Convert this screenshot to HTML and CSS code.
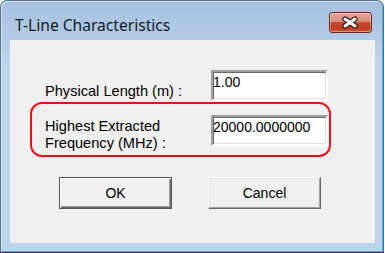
FILE: index.html
```html
<!DOCTYPE html>
<html>
<head>
<meta charset="utf-8">
<link rel="stylesheet" href="styles.css">
</head>
<body>
<div class="window">
  <div class="titlebar">
    <span class="title">T-Line Characteristics</span>
    <div class="close">
      <svg width="41" height="19" viewBox="0 0 41 19">
        <path d="M15 6 L25 13 M25 6 L15 13" stroke="#3a1d18" stroke-width="5.4" stroke-linecap="round" fill="none"/>
        <path d="M15 6 L25 13 M25 6 L15 13" stroke="#ffffff" stroke-width="3" stroke-linecap="round" fill="none"/>
      </svg>
    </div>
  </div>
  <div class="client">
    <div class="row">
      <span class="label label-single">Physical Length (m) :</span>
      <div class="edit">1.00</div>
    </div>
    <div class="highlight">
      <div class="row">
        <span class="label label-double">Highest Extracted<br>Frequency (MHz) :</span>
        <div class="edit">20000.0000000</div>
      </div>
    </div>
    <div class="buttons">
      <div class="btn btn-default">OK</div>
      <div class="btn">Cancel</div>
    </div>
  </div>
</div>
</body>
</html>
```
FILE: styles.css
```css
html, body {
  margin: 0;
  padding: 0;
  background: #ffffff;
}
body {
  font-family: "Liberation Sans", Arial, sans-serif;
  font-size: 14px;
  line-height: 17px;
  color: #000;
}
.window {
  box-sizing: border-box;
  width: 384px;
  height: 253px;
  border: 1px solid #55708c;
  border-bottom-color: #2b3b4c;
  border-radius: 7px 7px 0 0;
  background: linear-gradient(#a6c1df 0px, #b3cbe6 38px, #bcd4ec 60px, #bcd4ec 100%);
  box-shadow: inset 1px 1px 0 rgba(255,255,255,0.55), inset -1px -1px 0 #3cb4d8;
  padding: 0 8px 9px 9px;
  display: flex;
  flex-direction: column;
}
.titlebar {
  height: 39px;
  flex: none;
  display: flex;
  align-items: flex-start;
  justify-content: space-between;
  padding-left: 5px;
}
.title {
  font-family: "Noto Sans", "Open Sans", sans-serif;
  font-size: 15.6px;
  line-height: 20px;
  margin-top: 14px;
  color: #111a24;
}
.close {
  box-sizing: border-box;
  width: 43px;
  height: 21px;
  margin-top: 11px;
  margin-right: 3px;
  border: 1px solid #6a2a22;
  border-radius: 3px;
  background: linear-gradient(#e4a898 0%, #d98d7c 45%, #c54a31 50%, #bd3b22 80%, #cc5a3e 100%);
  box-shadow: inset 0 0 0 1px rgba(255,255,255,0.35);
}
.close svg {
  display: block;
}
.client {
  flex: none;
  height: 203px;
  background: #f0f0f0;
  padding: 30px 0 0 20px;
  box-sizing: border-box;
}
.row {
  display: flex;
  padding-left: 15px;
}
.label {
  width: 166px;
  flex: none;
  font-size: 14.6px;
}
.label-single {
  padding-top: 13px;
}
.label-double {
  padding-top: 3px;
}
.edit {
  box-sizing: border-box;
  width: 117px;
  height: 31px;
  background: #fff;
  border-style: solid;
  border-width: 2px;
  border-color: #a0a0a0 #ffffff #ffffff #a0a0a0;
  box-shadow: inset 1px 1px 0 #696969, inset -1px -1px 0 #e3e3e3;
  padding: 2px 0 0 0;
}
.highlight {
  box-sizing: border-box;
  width: 301px;
  height: 55px;
  margin-top: 1px;
  border: 2px solid #e8101a;
  border-radius: 12px;
  padding: 11px 0 0 0;
}
.highlight .row {
  padding-left: 13px;
}
.buttons {
  display: flex;
  gap: 36px;
  margin-top: 20px;
  padding-left: 29px;
}
.btn {
  box-sizing: border-box;
  width: 113px;
  height: 32px;
  background: #f0f0f0;
  display: flex;
  align-items: center;
  justify-content: center;
  border-style: solid;
  border-width: 1px;
  border-color: #ffffff #696969 #696969 #ffffff;
  box-shadow: inset -1px -1px 0 #a0a0a0, inset 1px 1px 0 #e3e3e3;
}
.btn-default {
  border-color: #5a5a5a;
  box-shadow: inset 1px 1px 0 #ffffff, inset -1px -1px 0 #696969, inset -2px -2px 0 #a0a0a0;
}
```
